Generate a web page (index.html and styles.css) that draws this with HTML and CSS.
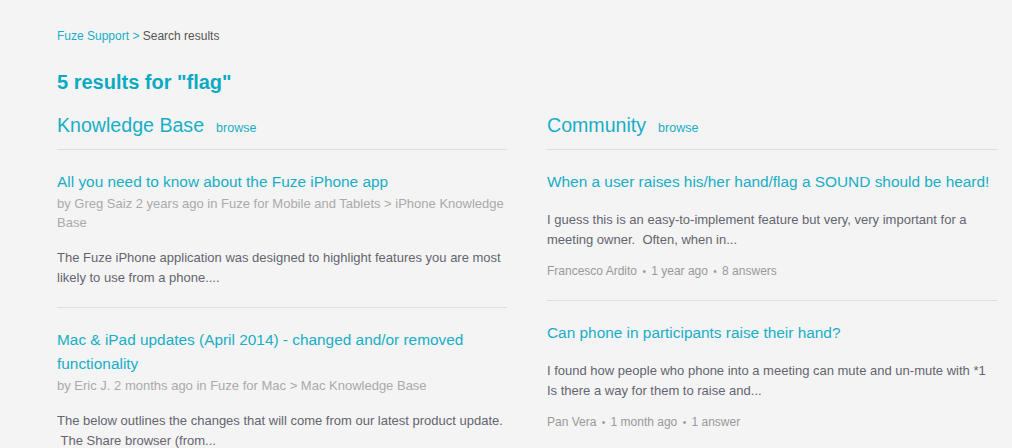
FILE: index.html
```html
<!DOCTYPE html>
<html>
<head>
<meta charset="utf-8">
<link rel="stylesheet" href="styles.css">
</head>
<body>
<div class="page">
  <div class="crumbs"><a class="link" href="#">Fuze Support</a> <span class="sep">&gt;</span> Search results</div>
  <h1 class="results-title">5 results for "flag"</h1>
  <div class="columns">
    <section class="col">
      <div class="col-head"><span class="col-title">Knowledge Base</span><a class="browse" href="#">browse</a></div>
      <article class="item">
        <a class="item-title" href="#">All you need to know about the Fuze iPhone app</a>
        <div class="kb-meta">by Greg Saiz 2 years ago in Fuze for Mobile and Tablets &gt; iPhone Knowledge Base</div>
        <p class="excerpt">The Fuze iPhone application was designed to highlight features you are most likely to use from a phone....</p>
      </article>
      <article class="item">
        <a class="item-title" href="#">Mac &amp; iPad updates (April 2014) - changed and/or removed functionality</a>
        <div class="kb-meta">by Eric J. 2 months ago in Fuze for Mac &gt; Mac Knowledge Base</div>
        <p class="excerpt">The below outlines the changes that will come from our latest product update. &nbsp;The Share browser (from...</p>
      </article>
    </section>
    <section class="col">
      <div class="col-head"><span class="col-title">Community</span><a class="browse" href="#">browse</a></div>
      <article class="item c-item">
        <a class="item-title" href="#">When a user raises his/her hand/flag a SOUND should be heard!</a>
        <p class="excerpt c-excerpt">I guess this is an easy-to-implement feature but very, very important for a meeting owner. &nbsp;Often, when in...</p>
        <div class="c-meta">Francesco Ardito <span class="dot">•</span> 1 year ago <span class="dot">•</span> 8 answers</div>
      </article>
      <article class="item c-item">
        <a class="item-title" href="#">Can phone in participants raise their hand?</a>
        <p class="excerpt c-excerpt">I found how people who phone into a meeting can mute and un-mute with *1 Is there a way for them to raise and...</p>
        <div class="c-meta">Pan Vera <span class="dot">•</span> 1 month ago <span class="dot">•</span> 1 answer</div>
      </article>
    </section>
  </div>
</div>
</body>
</html>
```
FILE: styles.css
```css
html, body {
  margin: 0;
  padding: 0;
  background: #f4f4f4;
}
body {
  font-family: "Liberation Sans", Arial, sans-serif;
  color: #666;
}
a { text-decoration: none; }
.page {
  padding: 28px 15px 0 57px;
}
.crumbs {
  font-size: 12px;
  line-height: 16px;
  color: #555;
}
.link { color: #18aec6; }
.sep { color: #18aec6; }
.results-title {
  margin: 24px 0 0;
  font-size: 20px;
  line-height: 28px;
  font-weight: bold;
  color: #0caac2;
}
.columns {
  display: grid;
  grid-template-columns: 450px 450px;
  column-gap: 40px;
  margin-top: 15px;
}
.col-head {
  display: flex;
  align-items: baseline;
  padding-bottom: 10px;
  border-bottom: 1px solid #dedede;
}
.col-title {
  font-size: 19.6px;
  line-height: 28px;
  color: #18aec6;
}
.browse {
  margin-left: 12px;
  font-size: 12.5px;
  color: #18aec6;
}
.item {
  padding: 20px 0 20px;
  border-bottom: 1px solid #dedede;
}
.c-item {
  padding-bottom: 18px;
}
.item-title {
  display: block;
  font-size: 15.4px;
  line-height: 24px;
  color: #18aec6;
}
.kb-meta {
  font-size: 13px;
  line-height: 19px;
  color: #aaa;
}
.excerpt {
  margin: 16px 0 0;
  font-size: 13px;
  line-height: 19.5px;
  color: #646470;
}
.c-excerpt {
  margin-top: 16px;
}
.c-meta {
  margin-top: 12px;
  font-size: 12px;
  line-height: 20px;
  color: #999;
}
.dot {
  margin: 0 2px;
  font-size: 10px;
}
```
